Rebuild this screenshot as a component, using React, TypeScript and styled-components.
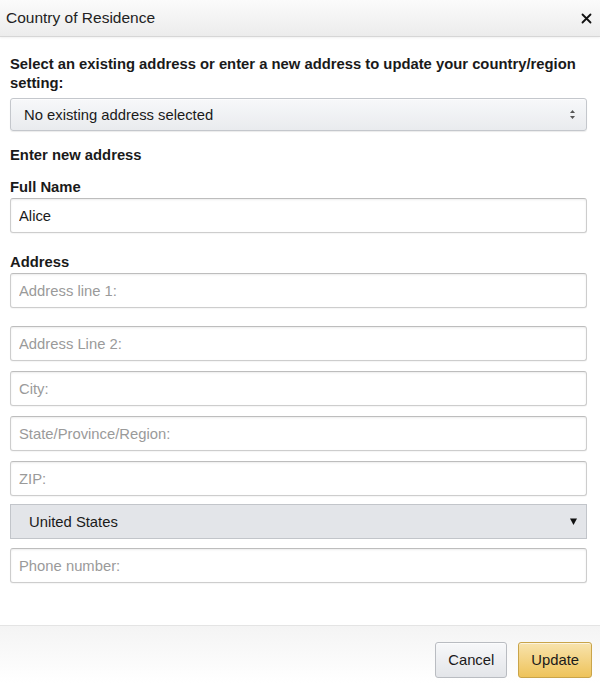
import React from 'react';
import styled, { createGlobalStyle } from 'styled-components';

const GlobalStyle = createGlobalStyle`
  html, body {
    margin: 0;
    padding: 0;
    background: #ffffff;
  }
  body {
    font-family: 'Liberation Sans', Arial, sans-serif;
    color: #111;
  }
`;

const Modal = styled.div`
  width: 600px;
  height: 683px;
  display: flex;
  flex-direction: column;
  background: #fff;
  overflow: hidden;
`;

const Header = styled.header`
  height: 37px;
  box-sizing: border-box;
  display: flex;
  align-items: center;
  justify-content: space-between;
  padding: 0 6px;
  background: linear-gradient(to bottom, #fbfbfb, #ececec);
  border-bottom: 1px solid #d6d6d6;
  box-shadow: 0 1px 2px rgba(0, 0, 0, 0.06);
`;

const Title = styled.h4`
  margin: 0;
  font-size: 15.5px;
  font-weight: normal;
  color: #222;
`;

const Close = styled.button`
  border: none;
  background: transparent;
  padding: 0 2px;
  display: flex;
  align-items: center;
  color: #111;
  cursor: pointer;
`;

const Body = styled.form`
  flex: 1;
  padding: 18px 13px 0 10px;
  display: flex;
  flex-direction: column;
`;

const Intro = styled.p`
  margin: 0 0 5px;
  font-size: 14.8px;
  line-height: 19px;
  font-weight: bold;
  color: #1a1a1a;
`;

const Heading = styled.div<{ $top: number }>`
  margin-top: ${(p) => p.$top}px;
  font-size: 14.8px;
  line-height: 19px;
  font-weight: bold;
  color: #1a1a1a;
`;

const Label = styled.label<{ $top: number }>`
  display: block;
  margin-top: ${(p) => p.$top}px;
  margin-bottom: 1px;
  font-size: 14.8px;
  line-height: 19px;
  font-weight: bold;
  color: #1a1a1a;
`;

const ButtonSelect = styled.div`
  height: 33px;
  box-sizing: border-box;
  display: flex;
  align-items: center;
  justify-content: space-between;
  padding: 0 10px 0 13px;
  border: 1px solid #c4c7cc;
  border-radius: 3px;
  background: linear-gradient(to bottom, #f7f8fa, #e9ebee);
  box-shadow: 0 1px 0 rgba(255, 255, 255, 0.6) inset, 0 1px 1px rgba(0, 0, 0, 0.08);
  font-size: 14.8px;
  color: #1a1a1a;
`;

const Input = styled.input<{ $gap: number }>`
  display: block;
  width: 100%;
  height: 35px;
  box-sizing: border-box;
  margin: 0 0 ${(p) => p.$gap}px;
  padding: 0 8px;
  border: 1px solid #cdcdcd;
  border-top-color: #bdbdbd;
  border-radius: 3px;
  box-shadow: 0 1px 2px rgba(0, 0, 0, 0.08) inset, 0 1px 1px rgba(0, 0, 0, 0.04);
  font-family: 'Liberation Sans', Arial, sans-serif;
  font-size: 14.8px;
  color: #1a1a1a;
  background: #fff;
  outline: none;

  &::placeholder {
    color: #9a9a9a;
  }
`;

const CountrySelect = styled.div`
  height: 35px;
  box-sizing: border-box;
  margin-bottom: 9px;
  display: flex;
  align-items: center;
  justify-content: space-between;
  padding: 0 8px 0 18px;
  border: 1px solid #c2c5ca;
  background: #e3e5e9;
  font-size: 14.8px;
  color: #1a1a1a;
`;

const Footer = styled.footer`
  height: 58px;
  box-sizing: border-box;
  display: flex;
  align-items: flex-start;
  justify-content: flex-end;
  gap: 11px;
  padding: 16px 8px 0 0;
  border-top: 1px solid #e4e4e4;
  background: linear-gradient(to bottom, #f4f4f4, #ffffff);
`;

const Button = styled.button<{ $primary?: boolean }>`
  height: 36px;
  padding: 0 12px;
  border: 1px solid ${(p) => (p.$primary ? '#c9a449' : '#b9bcc1')};
  border-radius: 3px;
  background: ${(p) =>
    p.$primary
      ? 'linear-gradient(to bottom, #f8e3ad, #eec35a)'
      : 'linear-gradient(to bottom, #f7f8fa, #e3e5e9)'};
  box-shadow: 0 1px 0 rgba(255, 255, 255, 0.6) inset;
  font-family: 'Liberation Sans', Arial, sans-serif;
  font-size: 14.8px;
  color: #1a1a1a;
  cursor: pointer;
`;

const Spin = () => (
  <svg width="7" height="11" viewBox="0 0 7 11" aria-hidden="true">
    <path d="M3.5 1 L6 4 H1 Z" fill="#555" />
    <path d="M3.5 10 L6 7 H1 Z" fill="#555" />
  </svg>
);

const Caret = () => (
  <svg width="9" height="9" viewBox="0 0 9 9" aria-hidden="true">
    <path d="M1 1.5 H8 L4.5 8 Z" fill="#111" />
  </svg>
);

const CloseIcon = () => (
  <svg width="11" height="11" viewBox="0 0 11 11" aria-hidden="true">
    <path d="M1.5 1.5 L9.5 9.5 M9.5 1.5 L1.5 9.5" stroke="#111" strokeWidth="1.8" strokeLinecap="round" />
  </svg>
);

const fields = [
  { placeholder: 'Address line 1:', gap: 18 },
  { placeholder: 'Address Line 2:', gap: 10 },
  { placeholder: 'City:', gap: 10 },
  { placeholder: 'State/Province/Region:', gap: 10 },
  { placeholder: 'ZIP:', gap: 8 },
];

export default function App() {
  return (
    <>
      <GlobalStyle />
      <Modal>
        <Header>
          <Title>Country of Residence</Title>
          <Close type="button" aria-label="Close">
            <CloseIcon />
          </Close>
        </Header>
        <Body onSubmit={(e) => e.preventDefault()}>
          <Intro>Select an existing address or enter a new address to update your country/region setting:</Intro>
          <ButtonSelect>
            <span>No existing address selected</span>
            <Spin />
          </ButtonSelect>
          <Heading $top={15}>Enter new address</Heading>
          <Label $top={13}>Full Name</Label>
          <Input $gap={0} defaultValue="Alice" />
          <Label $top={20}>Address</Label>
          {fields.map((f) => (
            <Input key={f.placeholder} $gap={f.gap} placeholder={f.placeholder} />
          ))}
          <CountrySelect>
            <span>United States</span>
            <Caret />
          </CountrySelect>
          <Input $gap={0} placeholder="Phone number:" />
        </Body>
        <Footer>
          <Button type="button">Cancel</Button>
          <Button type="button" $primary>
            Update
          </Button>
        </Footer>
      </Modal>
    </>
  );
}
